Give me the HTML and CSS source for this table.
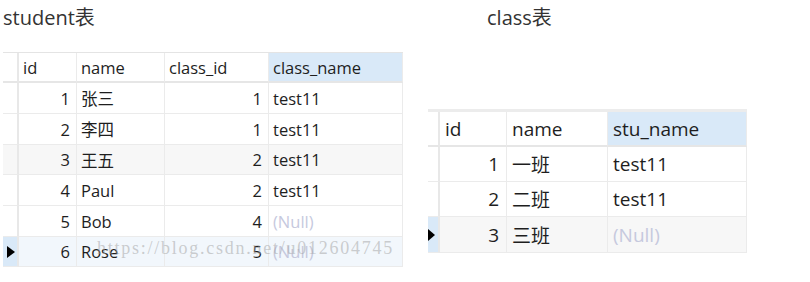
FILE: index.html
```html
<!DOCTYPE html>
<html lang="zh">
<head>
<meta charset="utf-8">
<link rel="stylesheet" href="styles.css">
</head>
<body>
<div class="page">
  <section class="block block-student">
    <h2 class="title">student表</h2>
    <div class="tbl tbl-student">
      <div class="row head">
        <div class="cell ind"></div>
        <div class="cell">id</div>
        <div class="cell">name</div>
        <div class="cell">class_id</div>
        <div class="cell sel">class_name</div>
      </div>
      <div class="row h31">
        <div class="cell ind"></div>
        <div class="cell num">1</div>
        <div class="cell">张三</div>
        <div class="cell num">1</div>
        <div class="cell">test11</div>
      </div>
      <div class="row h31">
        <div class="cell ind"></div>
        <div class="cell num">2</div>
        <div class="cell">李四</div>
        <div class="cell num">1</div>
        <div class="cell">test11</div>
      </div>
      <div class="row h30 alt">
        <div class="cell ind"></div>
        <div class="cell num">3</div>
        <div class="cell">王五</div>
        <div class="cell num">2</div>
        <div class="cell">test11</div>
      </div>
      <div class="row h31">
        <div class="cell ind"></div>
        <div class="cell num">4</div>
        <div class="cell">Paul</div>
        <div class="cell num">2</div>
        <div class="cell">test11</div>
      </div>
      <div class="row h31">
        <div class="cell ind"></div>
        <div class="cell num">5</div>
        <div class="cell">Bob</div>
        <div class="cell num">4</div>
        <div class="cell null">(Null)</div>
      </div>
      <div class="row h30 cur">
        <div class="cell ind curind"><span class="tri"></span></div>
        <div class="cell num">6</div>
        <div class="cell">Rose</div>
        <div class="cell num">5</div>
        <div class="cell null">(Null)</div>
      </div>
      <div class="watermark">https://blog.csdn.net/u012604745</div>
    </div>
  </section>
  <section class="block block-class">
    <h2 class="title title-class">class表</h2>
    <div class="tbl tbl-class">
      <div class="row head">
        <div class="cell ind"></div>
        <div class="cell">id</div>
        <div class="cell">name</div>
        <div class="cell sel">stu_name</div>
      </div>
      <div class="row">
        <div class="cell ind"></div>
        <div class="cell num">1</div>
        <div class="cell">一班</div>
        <div class="cell">test11</div>
      </div>
      <div class="row">
        <div class="cell ind"></div>
        <div class="cell num">2</div>
        <div class="cell">二班</div>
        <div class="cell">test11</div>
      </div>
      <div class="row alt last">
        <div class="cell ind curind"><span class="tri"></span></div>
        <div class="cell num">3</div>
        <div class="cell">三班</div>
        <div class="cell null">(Null)</div>
      </div>
    </div>
  </section>
</div>
</body>
</html>
```
FILE: styles.css
```css
html, body {
  margin: 0;
  padding: 0;
  background: #ffffff;
}
body {
  font-family: "Open Sans", "Noto Sans CJK SC", sans-serif;
  color: #1e1e1e;
}
.page {
  display: flex;
  align-items: flex-start;
}
.block-student {
  margin-left: 3px;
  width: 400px;
}
.block-class {
  margin-left: 25px;
}
.title {
  margin: 0;
  font-weight: 400;
  font-size: 20px;
  line-height: 24px;
  color: #333333;
  padding-top: 6px;
  height: 52px;
  box-sizing: border-box;
}
.title-class {
  margin-left: 59px;
  height: 109px;
}
.tbl {
  position: relative;
  border-top: 1px solid #e4e4e4;
}
.row {
  display: grid;
}
.tbl-student .row {
  grid-template-columns: 16px 58px 88px 104px 134px;
  font-size: 16.5px;
}
.tbl-student .head { height: 30px; }
.tbl-student .h31 { height: 31px; }
.tbl-student .h30 { height: 30px; }
.tbl-class {
  border-top: 3px solid #ececec;
}
.tbl-class .row {
  grid-template-columns: 12px 67px 101px 139px;
  font-size: 19px;
  height: 35px;
}
.tbl-class .head { height: 35px; }
.tbl-class .last { height: 36px; }
.cell {
  box-sizing: border-box;
  border-right: 1px solid #ebebeb;
  border-bottom: 1px solid #ebebeb;
  display: flex;
  align-items: center;
  padding: 0 4px;
  white-space: nowrap;
  overflow: hidden;
}
.tbl-class .cell {
  padding: 0 5px;
}
.head .cell {
  border-bottom: 2px solid #e6e6e6;
}
.cell.num {
  justify-content: flex-end;
  padding-right: 6px;
}
.tbl-class .cell.num {
  padding-right: 7px;
}
.cell.ind {
  padding: 0;
  border-right: 2px solid #e8e8e8;
}
.cell.sel {
  background: #d9e9f8;
}
.alt .cell {
  background: #f7f7f7;
}
.cur .cell {
  background: #f2f7fc;
}
.cell.curind {
  background: #d9e9f8;
}
.null {
  color: #c6c9de;
}
.tri {
  display: block;
  width: 0;
  height: 0;
  border-top: 6px solid transparent;
  border-bottom: 6px solid transparent;
  border-left: 8px solid #000000;
  margin-left: 4px;
}
.tbl-class .tri {
  margin-left: 0;
  border-left-width: 7px;
}
.watermark {
  position: absolute;
  left: 94px;
  top: 185px;
  font-family: "Liberation Serif", "DejaVu Serif", serif;
  font-size: 18px;
  letter-spacing: 1.75px;
  color: rgba(160, 160, 160, 0.5);
  pointer-events: none;
  white-space: nowrap;
}
```
